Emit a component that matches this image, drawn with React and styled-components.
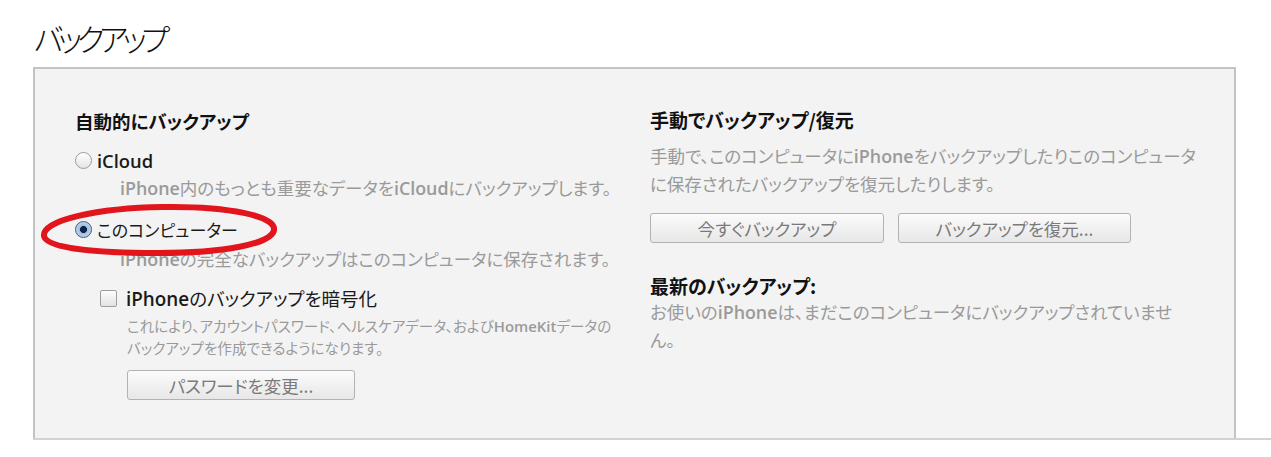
import styled, { createGlobalStyle } from "styled-components";

const GlobalStyle = createGlobalStyle`
  html, body {
    margin: 0;
    padding: 0;
    background: #ffffff;
  }
  body {
    font-family: "Noto Sans CJK JP", "Noto Sans", sans-serif;
    font-feature-settings: "palt";
    color: #1a1a1a;
  }
`;

const Page = styled.div`
  width: 1271px;
  height: 457px;
  overflow: hidden;
`;

const Title = styled.h1`
  margin: 0;
  padding: 16px 0 0 34px;
  height: 67px;
  box-sizing: border-box;
  font-size: 31px;
  font-weight: 300;
  letter-spacing: -5.5px;
  line-height: 44px;
  color: #111;
`;

const Section = styled.div`
  margin-left: 33px;
  border-bottom: 2px solid #d2d2d2;
`;

const Panel = styled.div`
  width: 1203px;
  height: 371px;
  box-sizing: border-box;
  background: #f3f3f3;
  border: 2px solid #c3c3c3;
  border-bottom: none;
  padding: 40px 0 0 40px;
  display: grid;
  grid-template-columns: 575px 1fr;
`;

const Column = styled.div`
  display: flex;
  flex-direction: column;
  align-items: flex-start;
`;

const Heading = styled.div`
  font-size: ${({ $size }) => $size || 19}px;
  font-weight: 700;
  line-height: 24px;
  color: #111;
  margin-top: ${({ $mt }) => $mt || 0}px;
  white-space: nowrap;
`;

const Latin = styled.span`
  font-family: "Open Sans", "Noto Sans", sans-serif;
  font-weight: 600;
  font-size: ${({ $scale }) => $scale || 1.02}em;
`;

const OptionRow = styled.div`
  position: relative;
  display: flex;
  align-items: center;
  gap: 5px;
  height: 26px;
  margin-top: ${({ $mt }) => $mt || 0}px;
  margin-left: ${({ $indent }) => $indent || 0}px;
  font-size: ${({ $size }) => $size || 17}px;
  color: #1a1a1a;
  white-space: nowrap;
`;

const Radio = styled.span`
  display: block;
  flex: 0 0 17px;
  width: 17px;
  height: 17px;
  box-sizing: border-box;
  border-radius: 50%;
  border: 1px solid ${({ $checked }) => ($checked ? "#3a5a86" : "#9c9c9c")};
  background: ${({ $checked }) =>
    $checked
      ? "radial-gradient(circle, #0e2447 0 3.2px, #9fbde2 3.8px, #d5e4f4 100%)"
      : "linear-gradient(#ffffff, #e4e4e4)"};
`;

const Checkbox = styled.span`
  display: block;
  flex: 0 0 17px;
  width: 17px;
  height: 17px;
  box-sizing: border-box;
  border: 1px solid #9e9e9e;
  border-radius: 2px;
  background: linear-gradient(#fdfdfd, #e2e2e2);
  margin-right: 4px;
`;

const SubText = styled.div`
  font-size: ${({ $small }) => ($small ? 14.6 : 17.5)}px;
  line-height: ${({ $lh }) => $lh || 26}px;
  color: #9a9a9a;
  margin-top: ${({ $mt }) => $mt || 0}px;
  margin-left: ${({ $indent }) => $indent || 0}px;
  white-space: nowrap;
`;

const Button = styled.button`
  width: ${({ $w }) => $w}px;
  height: ${({ $h }) => $h || 30}px;
  border: 1px solid #b2b2b2;
  border-radius: 3px;
  background: linear-gradient(#fbfbfb, #e7e7e7);
  font-family: inherit;
  font-feature-settings: "palt";
  font-size: 17.5px;
  color: #7a7a7a;
  padding: 0;
  margin-top: ${({ $mt }) => $mt || 0}px;
  margin-left: ${({ $indent }) => $indent || 0}px;
`;

const ButtonRow = styled.div`
  display: flex;
  gap: 14px;
  margin-top: ${({ $mt }) => $mt || 0}px;
`;

const Annotation = styled.svg`
  position: absolute;
  left: -37px;
  top: -14px;
  pointer-events: none;
`;

export default function App() {
  return (
    <Page>
      <GlobalStyle />
      <Title>バックアップ</Title>
      <Section>
        <Panel>
          <Column>
            <Heading $size={18.5}>自動的にバックアップ</Heading>
            <OptionRow $mt={14}>
              <Radio />
              <Latin $scale={1.08}>iCloud</Latin>
            </OptionRow>
            <SubText $mt={2} $indent={45}>
              <Latin>iPhone</Latin>内のもっとも重要なデータを<Latin>iCloud</Latin>
              にバックアップします。
            </SubText>
            <OptionRow $mt={15}>
              <Radio $checked />
              このコンピューター
              <Annotation width="242" height="56" viewBox="0 0 242 56">
                <path
                  d="M6 34 C 4 18, 60 6, 125 5 C 190 4, 238 14, 236 28 C 234 42, 185 51, 120 51 C 55 51, 8 46, 6 34 Z"
                  fill="none"
                  stroke="#e2141c"
                  strokeWidth="6"
                />
              </Annotation>
            </OptionRow>
            <SubText $mt={4} $indent={45}>
              <Latin>iPhone</Latin>の完全なバックアップはこのコンピュータに保存されます。
            </SubText>
            <OptionRow $mt={13} $indent={25} $size={18.5}>
              <Checkbox />
              <span>
                <Latin>iPhone</Latin>のバックアップを暗号化
              </span>
            </OptionRow>
            <SubText $small $lh={21} $mt={4} $indent={52}>
              これにより、アカウントパスワード、ヘルスケアデータ、および
              <Latin>HomeKit</Latin>データの
              <br />
              バックアップを作成できるようになります。
            </SubText>
            <Button $w={228} $mt={12} $indent={52}>
              パスワードを変更...
            </Button>
          </Column>
          <Column>
            <Heading $mt={-1}>手動でバックアップ/復元</Heading>
            <SubText $lh={27} $mt={10}>
              手動で、このコンピュータに<Latin>iPhone</Latin>
              をバックアップしたりこのコンピュータ
              <br />
              に保存されたバックアップを復元したりします。
            </SubText>
            <ButtonRow $mt={16}>
              <Button $w={234}>今すぐバックアップ</Button>
              <Button $w={233}>バックアップを復元...</Button>
            </ButtonRow>
            <Heading $mt={31}>最新のバックアップ:</Heading>
            <SubText $lh={27}>
              お使いの<Latin>iPhone</Latin>は、まだこのコンピュータにバックアップされていませ
              <br />
              ん。
            </SubText>
          </Column>
        </Panel>
      </Section>
    </Page>
  );
}
